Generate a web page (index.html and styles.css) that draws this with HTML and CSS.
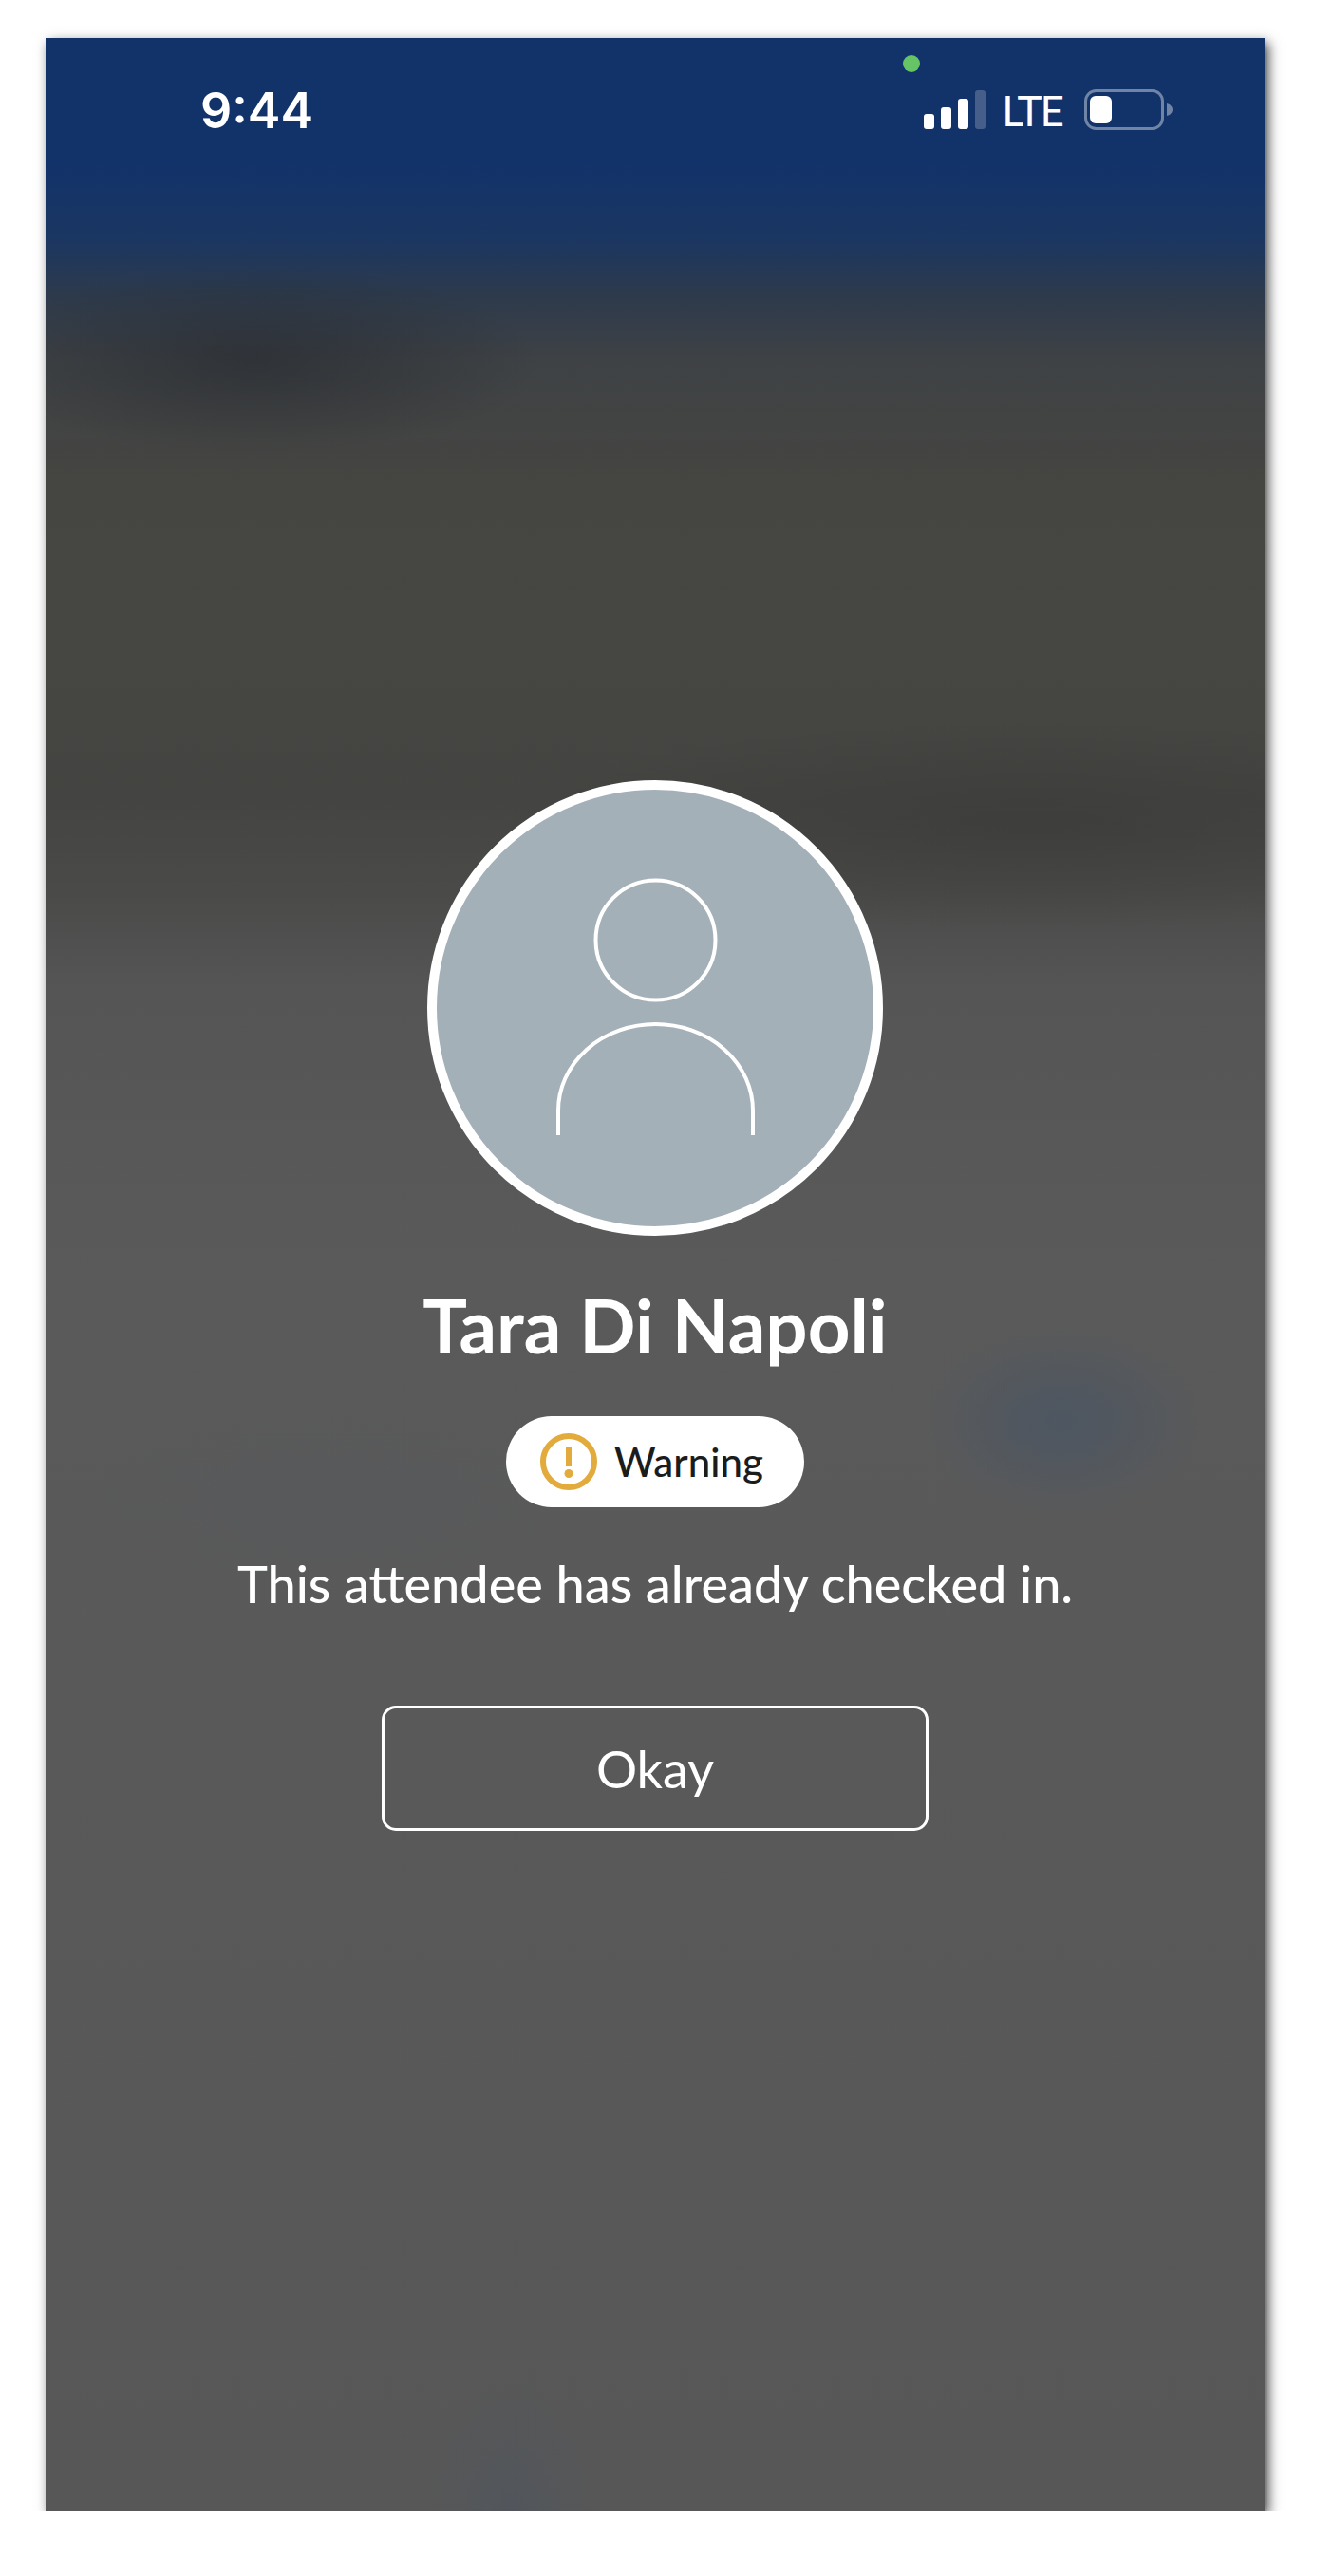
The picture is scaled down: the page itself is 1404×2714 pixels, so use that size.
FILE: index.html
```html
<!DOCTYPE html>
<html lang="en">
<head>
  <meta charset="UTF-8" />
  <meta name="viewport" content="width=device-width, initial-scale=1.0"/>
  <title>Check in</title>
  <link rel="stylesheet" href="styles.css">
</head>
<body>
  <main class="phone">
    <span class="camera-dot"></span>

    <header class="status-bar">
      <span class="time">9:44</span>
      <div class="status-icons">
        <svg class="signal" width="65" height="41" viewBox="0 0 65 41">
          <rect x="0" y="25" width="11" height="16" rx="3" fill="#fff"/>
          <rect x="18" y="18" width="11" height="23" rx="3" fill="#fff"/>
          <rect x="36" y="9" width="11" height="32" rx="3" fill="#fff"/>
          <rect x="54" y="0" width="11" height="41" rx="3" fill="#fff" fill-opacity="0.22"/>
        </svg>
        <span class="network">LTE</span>
        <svg class="battery" width="93" height="43" viewBox="0 0 93 43">
          <rect x="1.5" y="1.5" width="81" height="40" rx="11" fill="none" stroke="#fff" stroke-opacity="0.4" stroke-width="3"/>
          <rect x="6" y="7" width="23" height="29" rx="6" fill="#fff"/>
          <path d="M87 15 C91 16 93 19 93 21.500 C93 24 91 27 87 28 Z" fill="#fff" fill-opacity="0.4"/>
        </svg>
      </div>
    </header>

    <section class="attendee">
      <div class="avatar">
        <svg width="460" height="460" viewBox="0 0 460 460">
          <circle cx="230.500" cy="158.500" r="63" fill="none" stroke="#fff" stroke-width="4"/>
          <path d="M128 364 V338 A102.500 91 0 0 1 333 338 V364" fill="none" stroke="#fff" stroke-width="4"/>
        </svg>
      </div>
      <h1 class="name">Tara Di Napoli</h1>
      <div class="badge">
        <svg width="60" height="60" viewBox="0 0 60 60">
          <circle cx="30" cy="30" r="27" fill="none" stroke="#e2ab3b" stroke-width="6"/>
          <rect x="27" y="15" width="6" height="20" fill="#e2ab3b"/>
          <circle cx="30" cy="42.500" r="4.500" fill="#e2ab3b"/>
        </svg>
        <span>Warning</span>
      </div>
      <p class="message">This attendee has already checked in.</p>
      <button class="okay">Okay</button>
    </section>
  </main>
</body>
</html>
```

FILE: styles.css
```css
body {
  margin: 0;
  padding: 40px 0 0 48px;
  background: #fff;
  font-family: 'Lato', sans-serif;
  color: #fff;
}
.phone {
  position: relative;
  width: 1284px;
  height: 2605px;
  box-shadow: 4px 5px 12px rgba(0,0,0,0.7);
  background:
    radial-gradient(ellipse 150px 100px at 1070px 1457px, rgba(70,84,102,0.65), rgba(70,84,102,0) 100%),
    radial-gradient(ellipse 260px 90px at 300px 1540px, rgba(72,84,100,0.14), rgba(72,84,100,0) 100%),
    radial-gradient(ellipse 90px 130px at 490px 2600px, rgba(72,84,100,0.35), rgba(72,84,100,0) 100%),
    radial-gradient(ellipse 300px 100px at 220px 340px, rgba(35,38,44,0.55), rgba(35,38,44,0) 100%),
    radial-gradient(ellipse 560px 110px at 1040px 830px, rgba(55,55,53,0.55), rgba(55,55,53,0) 100%),
    linear-gradient(180deg, #12326a 0, #12326a 130px, #1a3662 210px, #2d3a4c 270px, #3f4245 340px, #454541 470px, #464642 620px, #444442 800px, #4a4a49 900px, #555 1000px, #5a5a5a 1300px, #595959 1800px, #575757 2605px);
}
.camera-dot {
  position: absolute;
  left: 903px;
  top: 18px;
  width: 18px;
  height: 18px;
  border-radius: 50%;
  background: #64c466;
}
.status-bar {
  display: flex;
  justify-content: space-between;
  align-items: center;
  height: 43px;
  padding: 54px 97px 0 163px;
}
.time {
  position: relative;
  top: 1px;
  font-family: 'Inter', sans-serif;
  font-size: 52px;
  font-weight: 600;
}
.status-icons {
  display: flex;
  align-items: center;
}
.network {
  margin: 0 23px 0 17px;
  font-size: 44px;
  letter-spacing: -2px;
}
.attendee {
  display: flex;
  flex-direction: column;
  align-items: center;
  margin-top: 685px;
}
.avatar {
  display: flex;
  box-sizing: border-box;
  width: 480px;
  height: 480px;
  border: 10px solid #fff;
  border-radius: 50%;
  background: #a4b0b8;
}
.name {
  margin: 44px 0 0;
  font-size: 78px;
  font-weight: 700;
  line-height: 100px;
}
.badge {
  display: flex;
  align-items: center;
  gap: 18px;
  box-sizing: border-box;
  height: 96px;
  margin-top: 46px;
  padding: 0 43px 0 36px;
  border-radius: 48px;
  background: #fff;
  color: #1c1c1c;
  font-size: 42px;
  font-weight: 500;
}
.message {
  margin: 45px 0 0;
  font-size: 54px;
  font-weight: 500;
  line-height: 72px;
}
.okay {
  box-sizing: border-box;
  width: 576px;
  height: 132px;
  margin-top: 92px;
  border: 3px solid #fff;
  border-radius: 15px;
  background: transparent;
  color: #fff;
  font-family: 'Lato', sans-serif;
  font-size: 54px;
  font-weight: 400;
}
```
